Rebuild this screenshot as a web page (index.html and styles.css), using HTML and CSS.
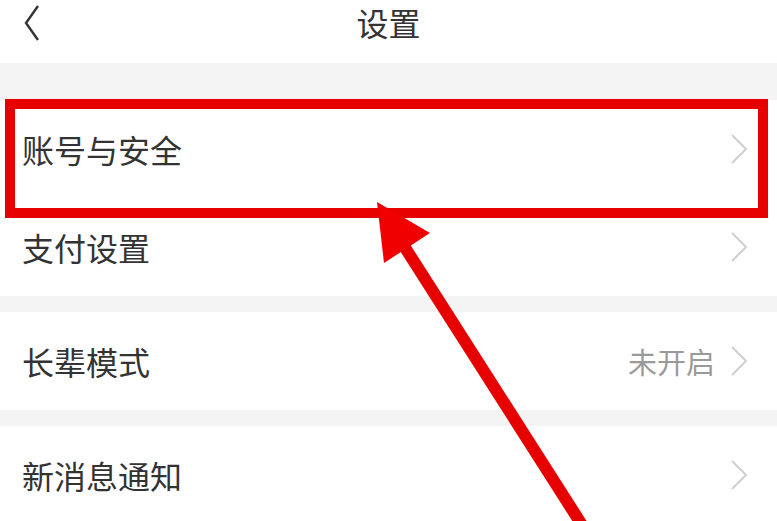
FILE: index.html
```html
<!DOCTYPE html>
<html lang="zh-CN">
<head>
<meta charset="utf-8">
<title>设置</title>
<link rel="stylesheet" href="styles.css">
</head>
<body>
<div class="page">
  <header class="nav">
    <span class="back">
      <svg width="16" height="38" viewBox="0 0 16 38"><polyline points="14,2 2,19 14,36" fill="none" stroke="#333" stroke-width="2.4" stroke-linejoin="miter"/></svg>
    </span>
    <h1 class="title">设置</h1>
  </header>
  <main class="content">
    <section class="group group-first">
      <div class="row"><span class="label">账号与安全</span><span class="right"><svg class="chev" width="20" height="32" viewBox="0 0 20 32"><polyline points="3,2 17,16 3,30" fill="none" stroke="#cfcfcf" stroke-width="2"/></svg></span></div>
      <div class="row"><span class="label">支付设置</span><span class="right"><svg class="chev" width="20" height="32" viewBox="0 0 20 32"><polyline points="3,2 17,16 3,30" fill="none" stroke="#cfcfcf" stroke-width="2"/></svg></span></div>
    </section>
    <section class="group">
      <div class="row"><span class="label">长辈模式</span><span class="right"><span class="value">未开启</span><svg class="chev" width="20" height="32" viewBox="0 0 20 32"><polyline points="3,2 17,16 3,30" fill="none" stroke="#cfcfcf" stroke-width="2"/></svg></span></div>
    </section>
    <section class="group">
      <div class="row"><span class="label">新消息通知</span><span class="right"><svg class="chev" width="20" height="32" viewBox="0 0 20 32"><polyline points="3,2 17,16 3,30" fill="none" stroke="#cfcfcf" stroke-width="2"/></svg></span></div>
    </section>
  </main>
  <svg class="annot" width="777" height="521" viewBox="0 0 777 521">
    <rect x="10" y="104" width="753" height="109" fill="none" stroke="#e60000" stroke-width="10"/>
    <line x1="404" y1="246" x2="582" y2="525" stroke="#e60000" stroke-width="12"/>
    <polygon points="377,202 384,263 430,233" fill="#f00000"/>
  </svg>
</div>
</body>
</html>
```
FILE: styles.css
```css
* { box-sizing: border-box; }
html, body { margin: 0; padding: 0; }
body {
  width: 777px;
  height: 521px;
  overflow: hidden;
  background: #f4f4f4;
  font-family: "Noto Sans CJK SC", "Noto Sans", sans-serif;
  color: #333;
}
.page { position: relative; width: 777px; height: 521px; }
.nav {
  height: 63px;
  background: #fff;
  display: flex;
  align-items: center;
  justify-content: center;
  position: relative;
}
.back {
  position: absolute;
  left: 24px;
  top: 4px;
  display: flex;
}
.title {
  margin: 0;
  font-size: 32px;
  font-weight: 400;
  line-height: 40px;
  margin-top: -20px;
  color: #333;
}
.content { display: flex; flex-direction: column; gap: 16px; padding-top: 37px; }
.group { background: #fff; }
.row {
  height: 98px;
  display: flex;
  align-items: center;
  justify-content: space-between;
  padding: 0 28px 0 22px;
}
.label { font-size: 32px; line-height: 40px; color: #333; }
.right { display: flex; align-items: center; gap: 14px; }
.value { font-size: 29px; color: #9a9a9a; line-height: 40px; }
.chev { display: block; }
.annot { position: absolute; left: 0; top: 0; pointer-events: none; }
```
